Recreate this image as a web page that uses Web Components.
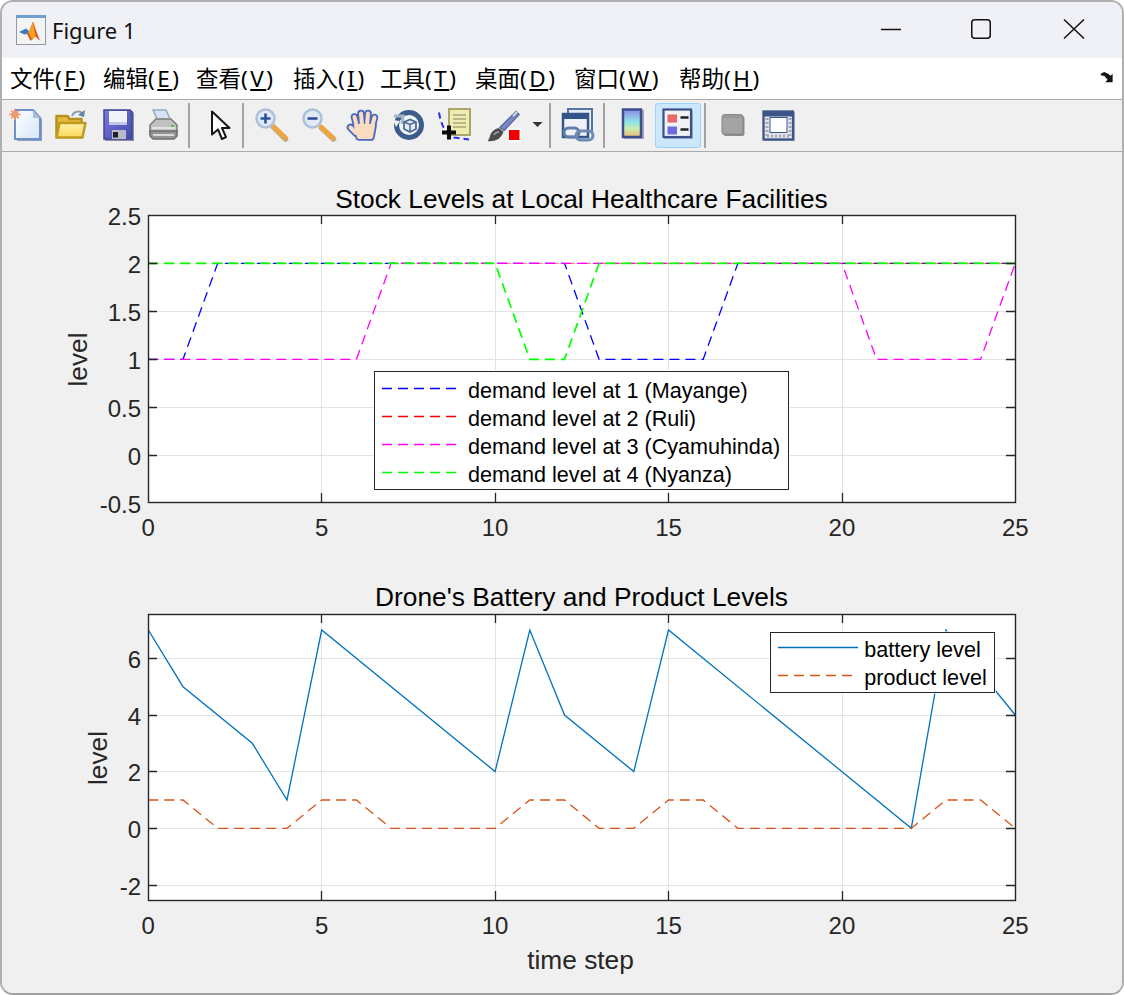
<!DOCTYPE html>
<html>
<head>
<meta charset="utf-8">
<title>Figure 1</title>
<style>
  html, body { margin: 0; padding: 0; background: #fff; }
  body { width: 1124px; height: 995px; overflow: hidden; }
</style>
</head>
<body>
<figure-window>
  <title-bar label="Figure 1"></title-bar>
  <menu-bar>
    <menu-item w="93" accel="F">文件</menu-item>
    <menu-item w="93" accel="E">编辑</menu-item>
    <menu-item w="97" accel="V">查看</menu-item>
    <menu-item w="87" accel="I">插入</menu-item>
    <menu-item w="95" accel="T">工具</menu-item>
    <menu-item w="99" accel="D">桌面</menu-item>
    <menu-item w="105" accel="W">窗口</menu-item>
    <menu-item w="90" accel="H">帮助</menu-item>
  </menu-bar>
  <tool-bar>
    <tool-button w="45" icon="new"></tool-button>
    <tool-button w="45" icon="open"></tool-button>
    <tool-button w="47" icon="save"></tool-button>
    <tool-button w="44" icon="print"></tool-button>
    <tool-sep w="10"></tool-sep>
    <tool-button w="44" icon="pointer"></tool-button>
    <tool-sep w="10"></tool-sep>
    <tool-button w="45" icon="zoomin"></tool-button>
    <tool-button w="47" icon="zoomout"></tool-button>
    <tool-button w="46" icon="hand"></tool-button>
    <tool-button w="46" icon="rotate"></tool-button>
    <tool-button w="46" icon="cursor"></tool-button>
    <tool-button w="52" icon="brush"></tool-button>
    <tool-button w="15" icon="drop"></tool-button>
    <tool-sep w="10"></tool-sep>
    <tool-button w="44" icon="link"></tool-button>
    <tool-sep w="10"></tool-sep>
    <tool-button w="46" icon="colorbar"></tool-button>
    <tool-button w="46" icon="legend" active></tool-button>
    <tool-sep w="8"></tool-sep>
    <tool-button w="48" icon="plottools"></tool-button>
    <tool-button w="43" icon="dock"></tool-button>
  </tool-bar>
  <figure-panel>
    <plot-axes config="stock" style="height:400px">
      <plot-legend style="left:372px;top:219px;width:415px;height:119px;padding-top:2.300px">
        <legend-row color="#0000ff" dash>demand level at 1 (Mayange)</legend-row>
        <legend-row color="#ff0000" dash>demand level at 2 (Ruli)</legend-row>
        <legend-row color="#ff00ff" dash>demand level at 3 (Cyamuhinda)</legend-row>
        <legend-row color="#00ff00" dash>demand level at 4 (Nyanza)</legend-row>
      </plot-legend>
    </plot-axes>
    <plot-axes config="drone" style="height:441px">
      <plot-legend style="left:768.300px;top:80px;width:224.400px;height:61px;padding-top:.9px">
        <legend-row color="#0072bd">battery level</legend-row>
        <legend-row color="#d95319" dash>product level</legend-row>
      </plot-legend>
    </plot-axes>
  </figure-panel>
</figure-window>

<script>
(function (customElements) {

    const UI_FONT = '"Noto Sans", "Noto Sans CJK SC", sans-serif';
    const PLOT_FONT = '"Liberation Sans", Arial, sans-serif';

    // toolbar icons, all on a 36x36 box
    const ICONS = {
        new: `<defs><linearGradient id="g" x1="0" y1="0" x2="1" y2="1"><stop offset="0" stop-color="#fff"/><stop offset="1" stop-color="#d5e6f8"/></linearGradient></defs>
          <path d="M8 3h18l7 8v22H8z" fill="#8d9cc0" transform="translate(1 1)"/>
          <path d="M7 3h18l7 8v21H7z" fill="url(#g)" stroke="#6f8fc6" stroke-width="2"/>
          <path d="M25 3v8h7z" fill="#a9bfdf"/>
          <circle cx="7" cy="7.500" r="3.600" fill="#f08a5a"/>
          <path d="M7 1.500v12M1 7.500h12M3 3.500l8 8M11 3.500l-8 8" stroke="#ee9c78" stroke-width="1.400"/>`,
        open: `<defs><linearGradient id="g" x1="0" y1="0" x2="0" y2="1"><stop offset="0" stop-color="#fff3a8"/><stop offset="1" stop-color="#fcd55a"/></linearGradient></defs>
          <path d="M19 9c2-5 8-6 11-2" fill="none" stroke="#8d9db0" stroke-width="2"/>
          <path d="M32 3l-1 7-6-2z" fill="#5d84ad"/>
          <path d="M3.500 30V9h11l2 3h12v18z" fill="#e6bb3c" stroke="#b8901e" stroke-width="2.500" stroke-linejoin="round"/>
          <path d="M3.500 30.500l3-14.500h26l-3 14.500z" fill="url(#g)" stroke="#c09a22" stroke-width="2.500" stroke-linejoin="round"/>`,
        save: `<defs><linearGradient id="g" x1="0" y1="0" x2="1" y2="1"><stop offset="0" stop-color="#7a7ce0"/><stop offset="1" stop-color="#4448a8"/></linearGradient></defs>
          <path d="M5 3h27l2 2v28H5z" fill="#8b8f9f" transform="translate(1 1)"/>
          <path d="M5 3h26l2 2v27H5z" fill="url(#g)" stroke="#3f4597" stroke-width="1.500"/>
          <rect x="10" y="4" width="18" height="14" fill="#f2f3fa"/>
          <rect x="10" y="15" width="18" height="3" fill="#c4c6e6"/>
          <rect x="13" y="23" width="14" height="9" fill="#b9bac8"/>
          <rect x="14" y="25" width="5" height="5.500" fill="#1f1f2c"/>`,
        print: `<path d="M9 3h13l5 11H14z" fill="#d4e4f4" stroke="#9aa8b8" stroke-width="1.500"/>
          <path d="M6 18l6-6h15l6 6v7H6z" fill="#c2c2c2" stroke="#7c7c7c" stroke-width="1.500"/>
          <path d="M6 24h27v5l-3 3H9l-3-3z" fill="#949494" stroke="#6e6e6e" stroke-width="1.500"/>
          <path d="M8 21h23M9 28h21" stroke="#efefef" stroke-width="1.500"/>
          <rect x="27" y="18" width="3" height="2" fill="#5cb860"/>`,
        pointer: `<path d="M14 4.500v23l6-5 4 9.500 4-1.800-4-9.200h7.500z" fill="#fff" stroke="#161616" stroke-width="2" stroke-linejoin="round"/>`,
        zoomin: `<path d="M20 19l12 12" stroke="#8a6a30" stroke-width="5.500" stroke-linecap="round" opacity=".5" transform="translate(.5 1)"/>
          <path d="M21 20l11.500 11" stroke="#efa53c" stroke-width="4.500" stroke-linecap="round"/>
          <circle cx="12.500" cy="11.500" r="9" fill="#dfeaf6" stroke="#aebfd8" stroke-width="2.500"/>
          <path d="M7.500 11.500h10M12.500 6.500v10" stroke="#2f4f9e" stroke-width="2.600"/>`,
        zoomout: `<path d="M22 20l12 11" stroke="#8a6a30" stroke-width="5.500" stroke-linecap="round" opacity=".5" transform="translate(.5 1)"/>
          <path d="M22 20l12 11" stroke="#efa53c" stroke-width="4.500" stroke-linecap="round"/>
          <circle cx="13.500" cy="11.500" r="9" fill="#dfeaf6" stroke="#aebfd8" stroke-width="2.500"/>
          <path d="M8.500 11.500h10" stroke="#2f4f9e" stroke-width="2.600"/>`,
        hand: `<g fill="none" stroke="#4a68bd" stroke-width="7.500" stroke-linecap="round" stroke-linejoin="round">
            <path d="M5.500 20.500L11 26M12 20L9.500 10M17 18L16 6.500M22 18L23 6.500M27 20L29.500 10.500"/>
            <path d="M11 19h17l-2 11H14z" fill="#4a68bd"/>
          </g>
          <g fill="none" stroke="#fadcc0" stroke-width="4" stroke-linecap="round" stroke-linejoin="round">
            <path d="M5.500 20.500L11 26M12 20L9.500 10M17 18L16 6.500M22 18L23 6.500M27 20L29.500 10.500"/>
            <path d="M11 19h17l-2 11H14z" fill="#fadcc0"/>
          </g>`,
        rotate: `<circle cx="18" cy="18" r="12.500" fill="#f2f5f9" stroke="#3d5c8c" stroke-width="5"/>
          <path d="M2 13l7 1 -4 6z" fill="#f0f0f0"/>
          <path d="M3 9h9l-1 8" fill="none" stroke="#a7b5c8" stroke-width="3"/>
          <path d="M13 15l6-2.500 6 2.500v7l-6 3-6-3z" fill="#e6ecf4" stroke="#4e6a94" stroke-width="1.800"/>
          <path d="M13 15l6 2.500 6-2.500M19 17.500V25" fill="none" stroke="#4e6a94" stroke-width="1.500"/>`,
        cursor: `<path d="M2 5.500C4 17 8 27 17 30.500l15 2" fill="none" stroke="#2a2af0" stroke-width="2" stroke-dasharray="6 4"/>
          <rect x="12" y="2" width="21" height="26" fill="#f0ecb0" stroke="#a9a66c" stroke-width="2"/>
          <path d="M16 8h13M16 12h13M16 16h13M16 20h13" stroke="#b9b78a" stroke-width="1.800"/>
          <path d="M12 18.500v14M5 25.500h14" stroke="#0c0c0c" stroke-width="4"/>`,
        brush: `<path d="M30 4.500l3 3-15 16-4-3z" fill="#7d88c6" stroke="#5c689f" stroke-width="1.500"/>
          <path d="M31 5l-4 4" stroke="#d7dcf0" stroke-width="2"/>
          <path d="M13 21c-5 1-8 4-9 8-1 3-1.500 4-2.500 5 6 1 13-1 16-9z" fill="#4c4c4c"/>
          <path d="M8 28c1-2 3-3 5-3" stroke="#9e9e9e" stroke-width="1.500" fill="none"/>
          <rect x="21" y="21" width="14" height="14" fill="#fff"/>
          <rect x="23" y="23" width="10.500" height="10" fill="#f20000"/>`,
        drop: `<path d="M2.500 15h10l-5 5z" fill="#333"/>`,
        link: `<rect x="9" y="2" width="24" height="22" fill="#e8edf5" stroke="#56759f" stroke-width="2"/>
          <rect x="4" y="7" width="25" height="23" fill="#eef2f8" stroke="#34558a" stroke-width="2.500"/>
          <rect x="4" y="7" width="25" height="5" fill="#34558a"/>
          <rect x="5" y="21" width="15" height="9" rx="4.500" fill="none" stroke="#607ea8" stroke-width="3"/>
          <rect x="17" y="24" width="17" height="9" rx="4.500" fill="none" stroke="#6d8ab3" stroke-width="3"/>`,
        colorbar: `<defs><linearGradient id="g" x1="0" y1="0" x2="0" y2="1"><stop offset="0" stop-color="#8f86ea"/><stop offset=".45" stop-color="#8de6e6"/><stop offset=".7" stop-color="#c8eeb0"/><stop offset="1" stop-color="#f4b870"/></linearGradient></defs>
          <rect x="10" y="3" width="20" height="29" fill="#a9a9b0"/>
          <rect x="9" y="2.500" width="18" height="27.500" fill="url(#g)" stroke="#3b4f8a" stroke-width="2.500"/>`,
        legend: `<rect x="4" y="3.500" width="29" height="28.500" fill="#9fabc0"/>
          <rect x="3.500" y="2.500" width="27.500" height="27.500" fill="#f1f2f6" stroke="#3b4f8a" stroke-width="2.200"/>
          <rect x="7.500" y="7.500" width="9.500" height="8" fill="#e86868"/>
          <rect x="7.500" y="19.500" width="9.500" height="8" fill="#6a6ae4"/>
          <path d="M20.500 10.500h8M20.500 22.500h8" stroke="#222" stroke-width="2.400"/>`,
        plottools: `<rect x="8.500" y="9" width="21" height="20" rx="2.500" fill="#8c8c8c"/>
          <rect x="7" y="7.500" width="21" height="20" rx="2.500" fill="#989898" stroke="#8a8a8a"/>
          <rect x="8" y="11" width="19" height="15" fill="#a4a4a4"/>`,
        dock: `<rect x="3" y="5" width="31" height="29" fill="#a8b0c0"/>
          <rect x="2.500" y="4.500" width="29.500" height="28" fill="#e4e6ee" stroke="#3d5488" stroke-width="2.300"/>
          <rect x="2.500" y="4.500" width="29.500" height="5" fill="#3d5488"/>
          <rect x="9" y="10.500" width="17" height="15" fill="#fff" stroke="#3d5488" stroke-width="1"/>
          <path d="M6 11v20M29 11v20M6 29h23" stroke="#a3a7b2" stroke-width="3" stroke-dasharray="2 2"/>`
    };

    // y0 is the pixel of value 0 inside the svg, unit the pixels per 1 on y
    const AXES = {
        stock: {
            box: { left: 146, top: 63, width: 867, height: 287 },
            title: 'Stock Levels at Local Healthcare Facilities',
            titleY: 56,
            y0: 303.3,
            unit: 96,
            yticks: [[-0.5, '-0.5', true], [0, '0'], [0.5, '0.5'], [1, '1'], [1.5, '1.5'], [2, '2'], [2.5, '2.5', true]],
            ylabelX: 85,
            series: [
                { color: '#0000ff', dash: true, pts: [[0, 1], [1, 1], [2, 2], [12, 2], [13, 1], [16, 1], [17, 2], [25, 2]] },
                { color: '#ff0000', dash: true, width: 0.6, pts: [[0, 2], [25, 2]] },
                { color: '#ff00ff', dash: true, pts: [[0, 1], [6, 1], [7, 2], [20, 2], [21, 1], [24, 1], [25, 2]] },
                { color: '#00ff00', dash: true, width: 1.7, pts: [[0, 2], [10, 2], [11, 1], [12, 1], [13, 2], [25, 2]] }
            ]
        },
        drone: {
            box: { left: 146, top: 62, width: 867, height: 286 },
            title: "Drone's Battery and Product Levels",
            titleY: 54,
            y0: 276.3,
            unit: 28.33,
            yticks: [[-2, '-2'], [0, '0'], [2, '2'], [4, '4'], [6, '6']],
            ylabelX: 105,
            xlabel: 'time step',
            series: [
                { color: '#0072bd', pts: [[0, 7], [1, 5], [3, 3], [4, 1], [5, 7], [10, 2], [11, 7], [12, 4], [14, 2], [15, 7], [22, 0], [23, 7], [25, 4]] },
                { color: '#d95319', dash: true, pts: [[0, 1], [1, 1], [2, 0], [4, 0], [5, 1], [6, 1], [7, 0], [10, 0], [11, 1], [12, 1], [13, 0], [14, 0], [15, 1], [16, 1], [17, 0], [22, 0], [23, 1], [24, 1], [25, 0]] }
            ]
        }
    };

    /** Base for the small elements: sets the shadow root once. */
    class ShadowElement extends HTMLElement {
        constructor() {
            super();
            this.attachShadow({ mode: 'open' });
        }
    }

    class FigureWindow extends ShadowElement {
        connectedCallback() {
            this.shadowRoot.innerHTML = `
      <style>
        :host {
          display: flex;
          flex-direction: column;
          box-sizing: border-box;
          width: 1124px;
          height: 995px;
          border: 2px solid #afafaf;
          border-bottom-color: #a2a2a2;
          border-radius: 13px;
          overflow: hidden;
          background: #f0f0f0;
        }
      </style>
      <slot></slot>`;
        }
    }

    class TitleBar extends ShadowElement {
        connectedCallback() {
            this.shadowRoot.innerHTML = `
      <style>
        :host {
          display: flex;
          align-items: center;
          flex: none;
          height: 56px;
          padding-left: 14px;
          background: #f0f1f7;
          color: #111;
          font: 22px ${UI_FONT};
        }
        .logo { display: block; margin-right: 6px; }
        .label { flex: 1; padding-bottom: 1px; }
        .ctl { display: block; flex: none; height: 56px; }
      </style>
      <svg class="logo" width="30" height="30" viewBox="0 0 30 30">
        <rect x=".5" y=".5" width="29" height="29" fill="#f4f4f4" stroke="#8e98a6"/>
        <rect x="0" y="0" width="30" height="3" fill="#6f9fcc"/>
        <path d="M17 6.500c2 5 4 13 7.500 19.500-2-1.500-3.500-3-5-4.500-2 1-3.500 3-5 4.500-1-3-2.500-5-4-7.500l3-3z" fill="#d9541e"/>
        <path d="M17 6.500c-1 4-2.500 7.500-4.500 10.500 1 3 2.500 6 4 8 1-1.500 2-3 3-3.500-1-5-1.500-10-2.500-15z" fill="#f6a21e"/>
        <path d="M3 17l7-3.500 3 2.500-2.500 3-2 .5z" fill="#3a7cc4"/>
      </svg>
      <span class="label">${this.getAttribute('label')}</span>
      <svg class="ctl" width="93" viewBox="0 0 93 56"><path d="M37 27.500h20" stroke="#111" stroke-width="1.500"/></svg>
      <svg class="ctl" width="93" viewBox="0 0 93 56"><rect x="34.750" y="17.750" width="18.500" height="18.500" rx="3" fill="none" stroke="#111" stroke-width="1.500"/></svg>
      <svg class="ctl" width="92" viewBox="0 0 92 56"><path d="M34 17.500l20 19M54 17.500L34 36.500" stroke="#111" stroke-width="1.500" fill="none"/></svg>`;
        }
    }

    class MenuBar extends ShadowElement {
        connectedCallback() {
            this.shadowRoot.innerHTML = `
      <style>
        :host {
          display: flex;
          align-items: center;
          flex: none;
          box-sizing: border-box;
          height: 42px;
          padding: 0 6px 2px 8px;
          background: #fff;
          border-bottom: 1.500px solid #ababab;
          color: #000;
          font: 22.500px ${UI_FONT};
        }
        .grip { margin-left: auto; display: block; }
      </style>
      <slot></slot>
      <svg class="grip" width="16" height="13" viewBox="0 0 16 14"><path d="M0 3l4-2 4 2 3 2 2-2v9H5l2.500-2.500L4 5 1 5z" fill="#151515"/></svg>`;
        }
    }

    class MenuItem extends ShadowElement {
        connectedCallback() {
            this.shadowRoot.innerHTML = `
      <style>
        :host { display: block; flex: none; width: ${this.getAttribute('w')}px; white-space: nowrap; }
        u { text-decoration-thickness: 1.500px; text-underline-offset: 2px; }
        .acc { letter-spacing: 2.500px; }
      </style>
      <slot></slot><span class="acc">(<u>${this.getAttribute('accel')}</u>)</span>`;
        }
    }

    class ToolBar extends ShadowElement {
        connectedCallback() {
            this.shadowRoot.innerHTML = `
      <style>
        :host {
          display: flex;
          align-items: center;
          flex: none;
          box-sizing: border-box;
          height: 52px;
          padding: 0 1px 1px;
          background: #f0f0f0;
          border-bottom: 1.500px solid #a9a9a9;
        }
      </style>
      <slot></slot>`;
        }
    }

    class ToolButton extends ShadowElement {
        connectedCallback() {
            const w = this.getAttribute('w');
            const name = this.getAttribute('icon');
            const small = name === 'drop';
            const box = small ? `0 0 15 36` : `0 0 36 36`;
            this.shadowRoot.innerHTML = `
      <style>
        :host {
          display: flex;
          align-items: center;
          justify-content: center;
          flex: none;
          box-sizing: border-box;
          width: ${w}px;
          height: 45px;
        }
        :host([active]) {
          background: #cce8ff;
          border: 1px solid #99d1ff;
          border-radius: 3px;
        }
        svg { display: block; filter: blur(.6px); overflow: visible; }
      </style>
      <svg width="${small ? 15 : 36}" height="36" viewBox="${box}">${ICONS[name]}</svg>`;
        }
    }

    class ToolSep extends ShadowElement {
        connectedCallback() {
            this.shadowRoot.innerHTML = `
      <style>
        :host {
          display: flex;
          justify-content: center;
          flex: none;
          width: ${this.getAttribute('w')}px;
          height: 45px;
        }
        i { display: block; width: 1.500px; background: #a3a3a3; }
      </style>
      <i></i>`;
        }
    }

    class FigurePanel extends ShadowElement {
        connectedCallback() {
            this.shadowRoot.innerHTML = `
      <style>
        :host { display: flex; flex-direction: column; flex: 1; background: #f0f0f0; }
      </style>
      <slot></slot>`;
        }
    }

    class PlotAxes extends ShadowElement {
        connectedCallback() {
            const cfg = AXES[this.getAttribute('config')];
            const { left, top, width, height } = cfg.box;
            const right = left + width;
            const bottom = top + height;
            const sx = (x) => left + 0.3 + (x / 25) * width;
            const sy = (y) => cfg.y0 - y * cfg.unit;
            const snap = (v) => Math.floor(v + 0.1) + 0.5;
            const xticks = [0, 5, 10, 15, 20, 25];

            let grid = '';
            let ticks = '';
            let labels = '';
            xticks.forEach((x) => {
                const px = snap(sx(x));
                if (x > 0 && x < 25) {
                    grid += `<path d="M${px} ${top}V${bottom}"/>`;
                    ticks += `<path d="M${px} ${top}v9M${px} ${bottom}v-9"/>`;
                }
                labels += `<text x="${sx(x)}" y="${bottom + 33.5}" text-anchor="middle">${x}</text>`;
            });
            cfg.yticks.forEach(([y, label, edge]) => {
                const py = snap(sy(y));
                if (!edge) {
                    grid += `<path d="M${left} ${py}H${right}"/>`;
                    ticks += `<path d="M${left} ${py}h9M${right} ${py}h-9"/>`;
                }
                labels += `<text x="${left - 7}" y="${sy(y) + 9.7}" text-anchor="end">${label}</text>`;
            });
            const lines = cfg.series.map((s) => {
                const pts = s.pts.map(([x, y]) => `${sx(x).toFixed(1)},${sy(y).toFixed(1)}`).join(' ');
                const dash = s.dash ? 'stroke-dasharray="10 6"' : '';
                return `<polyline points="${pts}" fill="none" stroke="${s.color}" stroke-width="${s.width || 1.3}" ${dash}/>`;
            }).join('');
            const midX = left + width / 2;
            const midY = top + height / 2 + 1;

            this.shadowRoot.innerHTML = `
      <style>
        :host { display: block; position: relative; flex: none; }
        svg { display: block; }
        text { font-family: ${PLOT_FONT}; }
        .tick { font-size: 24px; fill: #262626; }
        .title { font-size: 26.300px; fill: #000; }
        .label { font-size: 26.300px; fill: #262626; }
        .grid path { stroke: #e2e2e2; stroke-width: 1; fill: none; }
        .ticks path { stroke: #262626; stroke-width: 1.300; fill: none; }
      </style>
      <svg width="1120" height="100%">
        <rect x="${left}" y="${top}" width="${width}" height="${height}" fill="#fff"/>
        <g class="grid">${grid}</g>
        ${lines}
        <g class="ticks">${ticks}</g>
        <rect x="${left + 0.5}" y="${top + 0.5}" width="${width}" height="${height}" fill="none" stroke="#262626" stroke-width="1.400"/>
        <g class="tick">${labels}</g>
        <text class="title" x="${midX}" y="${cfg.titleY}" text-anchor="middle">${cfg.title}</text>
        <text class="label" text-anchor="middle" transform="translate(${cfg.ylabelX} ${midY}) rotate(-90)">level</text>
        ${cfg.xlabel ? `<text class="label" x="${midX - 1}" y="${bottom + 69}" text-anchor="middle">${cfg.xlabel}</text>` : ''}
      </svg>
      <slot></slot>`;
        }
    }

    class PlotLegend extends ShadowElement {
        connectedCallback() {
            this.shadowRoot.innerHTML = `
      <style>
        :host {
          display: grid;
          grid-auto-rows: 28px;
          align-content: start;
          position: absolute;
          box-sizing: border-box;
          padding: 0 6.500px;
          background: #fff;
          border: 1.400px solid #262626;
          box-shadow: 0 0 0 1px rgba(255,255,255,.65);
        }
      </style>
      <slot></slot>`;
        }
    }

    class LegendRow extends ShadowElement {
        connectedCallback() {
            const color = this.getAttribute('color');
            const dash = this.hasAttribute('dash') ? 'stroke-dasharray="10 6"' : '';
            this.shadowRoot.innerHTML = `
      <style>
        :host {
          display: flex;
          align-items: center;
          white-space: nowrap;
          color: #000;
          font: 21.600px ${PLOT_FONT};
        }
        svg { display: block; flex: none; margin-right: 6.500px; }
        span { padding-top: 5px; }
      </style>
      <svg width="80" height="5"><path d="M0 2.500H80" stroke="${color}" stroke-width="1.300" ${dash}/></svg>
      <span><slot></slot></span>`;
        }
    }

    customElements.define('figure-window', FigureWindow);
    customElements.define('title-bar', TitleBar);
    customElements.define('menu-bar', MenuBar);
    customElements.define('menu-item', MenuItem);
    customElements.define('tool-bar', ToolBar);
    customElements.define('tool-button', ToolButton);
    customElements.define('tool-sep', ToolSep);
    customElements.define('figure-panel', FigurePanel);
    customElements.define('plot-axes', PlotAxes);
    customElements.define('plot-legend', PlotLegend);
    customElements.define('legend-row', LegendRow);

})(window.customElements);
</script>
</body>
</html>
